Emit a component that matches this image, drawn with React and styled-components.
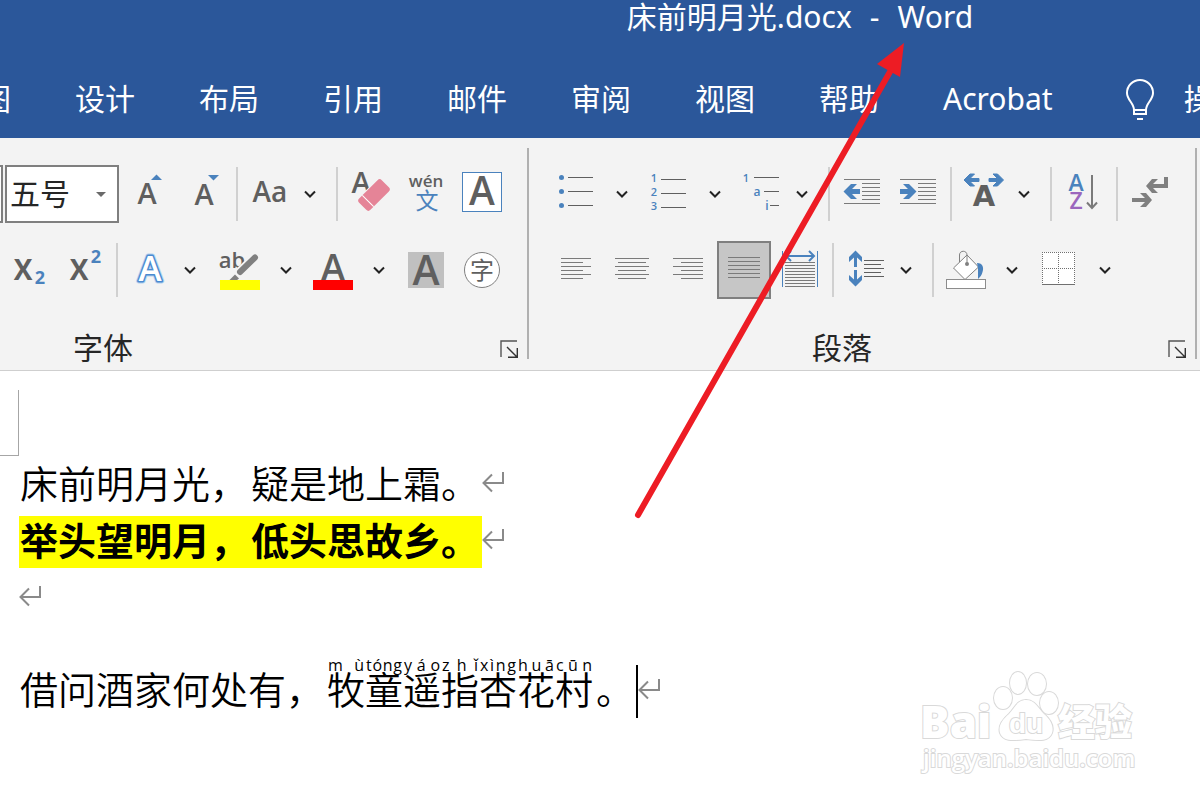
import styled, { createGlobalStyle } from "styled-components"

const INK = "#5f5f5f"
const LINE = "#7a7a7a"
const BLUE = "#4a82bd"

const GlobalStyle = createGlobalStyle`
  * {
    box-sizing: border-box;
  }
  body {
    margin: 0;
    background-color: white;
    font-family: "Noto Sans", "Noto Sans CJK SC", sans-serif;
  }
  button, select {
    font-family: inherit;
  }
`

const Page = styled.div`
  position: relative;
  display: flex;
  flex-direction: column;
  min-height: 100vh;
  overflow: hidden;
`
const Header = styled.header`
  background-color: #2b579a;
  color: white;
  font-size: 30px;
  overflow: hidden;
`
const Title = styled.h1`
  display: flex;
  justify-content: center;
  gap: 18px;
  margin: 0;
  padding-left: 400px;
  height: 61px;
  line-height: 34px;
  font-size: 30px;
  font-weight: 400;
  white-space: nowrap;
`
const Tabs = styled.nav`
  display: flex;
  align-items: center;
  gap: 64px;
  height: 77px;
  margin-left: -49px;
  padding-bottom: 1px;
`
const Tab = styled.button`
  flex: none;
  padding: 0;
  border: 0;
  background: none;
  color: inherit;
  font-size: 30px;
  line-height: 40px;
`
const Search = styled(Tab)`
  display: flex;
  align-items: center;
  gap: 28px;
  margin-left: 5px;
  white-space: nowrap;
`
const Ribbon = styled.section`
  display: flex;
  align-items: flex-start;
  padding-top: 10px;
  background-color: #f3f3f3;
  border-bottom: 1px solid #cfcfcf;
  overflow: hidden;
`
const Group = styled.div`
  flex: none;
  padding: 17px 0 3px;
`
const GroupEnd = styled.div`
  flex: none;
  width: 2px;
  height: 211px;
  background-color: #b0b0b0;
`
const Row = styled.div`
  display: flex;
  align-items: center;
  height: 58px;
  margin-bottom: 18px;
  padding-right: ${(props) => props.$end || 0}px;
`
const Footer = styled.div`
  display: flex;
  align-items: center;
  justify-content: space-between;
  height: 36px;
  margin-top: 32px;
  padding: 0 8px 0 ${(props) => props.$start}px;
  color: #262626;
  font-size: 30px;
  line-height: 34px;
`
const FooterLabel = styled.span`
  align-self: flex-start;
`
const Tool = styled.button`
  flex: none;
  display: flex;
  align-items: center;
  justify-content: center;
  width: ${(props) => props.$w}px;
  height: 58px;
  padding: 0;
  border: 0;
  background-color: ${(props) => (props.$active ? "#c6c6c6" : "transparent")};
  box-shadow: ${(props) => (props.$active ? "inset 0 0 0 2px #7f7f7f" : "none")};
`
const Launcher = styled(Tool)`
  height: 19px;
`
const Divider = styled.div`
  flex: none;
  width: 2px;
  height: 54px;
  margin-left: ${(props) => props.$gap || 0}px;
  background-color: #d0d0d0;
`
const Combo = styled.div`
  flex: none;
  position: relative;
  width: 114px;
  margin-right: ${(props) => props.$gap || 0}px;
  svg {
    position: absolute;
    right: 13px;
    top: 27px;
    pointer-events: none;
  }
`
const ComboSelect = styled.select`
  appearance: none;
  display: block;
  width: 100%;
  height: 58px;
  padding: 0 3px 2px;
  border: 2px solid #7f7f7f;
  border-radius: 0;
  background-color: white;
  color: #262626;
  font-size: 30px;
`
const FontRow = styled(Row)`
  margin-left: ${(props) => props.$pull || 0}px;
`
const Document = styled.main`
  position: relative;
  flex: 1;
  padding: 19px 0 0;
  color: black;
  font-family: "Noto Sans CJK SC", sans-serif;
  font-size: 38px;
`
const MarginCorner = styled.div`
  width: 19px;
  height: 66px;
  border-right: 1px solid #a6a6a6;
  border-bottom: 1px solid #a6a6a6;
`
const Line = styled.p`
  display: flex;
  align-items: center;
  height: 57px;
  margin: 0;
  padding-left: 19px;
  font-weight: ${(props) => (props.$bold ? 700 : 350)};
  > svg {
    margin-bottom: 5px;
  }
`
const Run = styled.span`
  display: flex;
  align-items: flex-start;
  gap: 3px;
  height: 52px;
  padding-right: 3px;
  padding-left: 1px;
  line-height: 46px;
  background-color: ${(props) => (props.$highlight ? "#ffff00" : "transparent")};
`
const Poem = styled(Run)`
  padding-right: 2px;
`
const VerseLine = styled(Line)`
  height: 64px;
  margin-top: 32px;
`
const Phonetic = styled.span`
  position: relative;
  display: block;
  width: 38px;
`
const Reading = styled.span`
  position: absolute;
  left: 1px;
  right: 1px;
  top: -8px;
  display: flex;
  justify-content: space-between;
  font-family: "Open Sans", sans-serif;
  font-size: 16px;
  line-height: 16px;
  font-weight: 400;
`
const Guide = styled.span`
  display: flex;
`
const Caret = styled.span`
  width: 2px;
  height: 53px;
  background-color: black;
`
const Annotation = styled.svg`
  position: absolute;
  left: 630px;
  top: 40px;
  pointer-events: none;
`
const Watermark = styled.svg`
  position: absolute;
  right: 56px;
  bottom: 20px;
`

const tabs = ["绘图", "设计", "布局", "引用", "邮件", "审阅", "视图", "帮助", "Acrobat"]

const verse = [
  ["牧", "mù"],
  ["童", "tóng"],
  ["遥", "yáo"],
  ["指", "zhǐ"],
  ["杏", "xìng"],
  ["花", "huā"],
  ["村", "cūn"],
]

function Icon({ w, label, active, children }) {
  return (
    <Tool $w={w} $active={active} aria-label={label} aria-pressed={active}>
      <svg width={w} height="58" fontFamily="Open Sans" fontWeight="600" fill={INK}>
        {children}
      </svg>
    </Tool>
  )
}

function Letter({ x, y, size, children, ...rest }) {
  return (
    <text x={x} y={y} fontSize={size} textAnchor="middle" {...rest}>
      {children}
    </text>
  )
}

function More({ w = 28, label }) {
  return (
    <Tool $w={w} aria-label={label}>
      <svg width="12" height="8" fill="none" stroke="#222" strokeWidth="2">
        <path d="M1 1.5 6 6.5 11 1.5" />
      </svg>
    </Tool>
  )
}

// each line is [x1, x2, y], one pixel tall
function Rules({ lines, color = LINE }) {
  return lines.map(([x1, x2, y]) => (
    <rect key={`${x1}-${y}`} x={x1} y={y} width={x2 - x1} height="1" fill={color} />
  ))
}

function alignLines(long, short, top = 17) {
  return [0, 1, 2, 3, 4, 5].map((i) => [...(i % 2 ? short : long), top + i * 4])
}

function LaunchButton({ label }) {
  return (
    <Launcher $w={19} aria-label={label}>
      <svg width="19" height="19" fill="none" stroke="#555" strokeWidth="1.4">
        <path d="M17 1H1V17" />
        <path d="M7 7 17 17M17.3 8V17.3H8" stroke="#333" />
      </svg>
    </Launcher>
  )
}

function ReturnMark() {
  return (
    <svg width="23" height="22" fill="none" stroke="#8a8a8a" strokeWidth="2">
      <path d="M21 1V12H1.5M10 3.5 1.5 12 10 20.5" />
    </svg>
  )
}

function FontGroup() {
  return (
    <Group>
      <FontRow $end={17} $pull={-111}>
        <Combo $gap={2}>
          <ComboSelect aria-label="字体名称" />
        </Combo>
        <Combo>
          <ComboSelect aria-label="字号">
            <option>五号</option>
          </ComboSelect>
          <svg width="10" height="5" fill="#6a6a6a">
            <path d="M0 0H10L5 5Z" />
          </svg>
        </Combo>
        <Icon w={57} label="增大字号">
          <Letter x={28} y={39} size={29}>A</Letter>
          <path d="M32 15H43L37.500 9.500Z" fill={BLUE} />
        </Icon>
        <Icon w={60} label="减小字号">
          <Letter x={28} y={40} size={29}>A</Letter>
          <path d="M32 10H43L37.500 15.500Z" fill={BLUE} />
        </Icon>
        <Divider />
        <Icon w={56} label="更改大小写">
          <Letter x={32} y={37} size={28}>Aa</Letter>
        </Icon>
        <More w={32} label="更改大小写选项" />
        <Divider $gap={10} />
        <Icon w={60} label="清除格式">
          <Letter x={23} y={28} size={29}>A</Letter>
          <g transform="rotate(-45 36 30)">
            <rect x="19" y="21" width="34" height="18" rx="4" fill="#f3f3f3" />
            <rect x="20" y="22" width="32" height="16" rx="3" fill="#e58497" />
            <rect x="27" y="22" width="1" height="16" fill="#fff" />
          </g>
        </Icon>
        <Icon w={56} label="拼音指南">
          <Letter x={28} y={22} size={17}>wén</Letter>
          <Letter x={29} y={44} size={23} fill={BLUE} fontFamily="Noto Sans CJK SC" fontWeight="400">
            文
          </Letter>
        </Icon>
        <Icon w={56} label="字符边框">
          <rect x="8.500" y="7.500" width="39" height="39" fill="#fff" stroke={BLUE} />
          <Letter x={28} y={40} size={39}>A</Letter>
        </Icon>
      </FontRow>
      <Row $end={17}>
        <Icon w={58} label="下标">
          <Letter x={23} y={39} size={28} fontWeight="700">X</Letter>
          <Letter x={40} y={43} size={18} fill={BLUE} fontWeight="700">2</Letter>
        </Icon>
        <Icon w={58} label="上标">
          <Letter x={21} y={39} size={28} fontWeight="700">X</Letter>
          <Letter x={38} y={22} size={18} fill={BLUE} fontWeight="700">2</Letter>
        </Icon>
        <Divider />
        <Icon w={60} label="文本效果">
          <Letter x={32} y={40} size={35} fill="none" stroke="#b9d5f1" strokeWidth="5" strokeLinejoin="round">A</Letter>
          <Letter x={32} y={40} size={35} fill="#fff" stroke="#4a8ad0" strokeWidth="3" strokeLinejoin="round" paintOrder="stroke">A</Letter>
        </Icon>
        <More w={24} label="文本效果选项" />
        <Icon w={72} label="突出显示">
          <Letter x={30} y={27} size={22}>ab</Letter>
          <path d="M29 39 53 16" stroke="#f3f3f3" strokeWidth="9" />
          <path d="M38 31 53 16.500" stroke="#808080" strokeWidth="6" strokeLinecap="round" />
          <path d="M27 39.500 33 33.500 37 37.500 34.500 39.500Z" fill="#808080" />
          <path d="M33 31 40 38" stroke="#f3f3f3" />
          <rect x="18" y="39" width="40" height="10" fill="#ff0" />
        </Icon>
        <More w={24} label="突出显示颜色" />
        <Icon w={69} label="字体颜色">
          <Letter x={35} y={40} size={37}>A</Letter>
          <rect x="15" y="39" width="40" height="10" fill="red" />
        </Icon>
        <More w={24} label="字体颜色选项" />
        <Icon w={63} label="字符底纹">
          <rect x="17" y="11" width="36" height="36" fill="#c0c0c0" />
          <Letter x={35} y={44} size={41}>A</Letter>
        </Icon>
        <Icon w={56} label="带圈字符">
          <circle cx="28" cy="29" r="17.500" fill="#fff" stroke="#7f7f7f" />
          <Letter x={28} y={38} size={24} fontFamily="Noto Sans CJK SC" fontWeight="400">字</Letter>
        </Icon>
      </Row>
      <Footer $start={73}>
        <FooterLabel>字体</FooterLabel>
        <LaunchButton label="字体设置" />
      </Footer>
    </Group>
  )
}

function ParagraphGroup() {
  const indentRules = [18, 22, 26, 30, 34]
  return (
    <Group>
      <Row $end={13}>
        <Icon w={79} label="项目符号">
          {[12, 26, 40].map((y) => (
            <circle key={y} cx="32.500" cy={y + 0.5} r="2.500" fill={BLUE} />
          ))}
          <Rules color={INK} lines={[[39, 64, 12], [39, 64, 26], [39, 64, 40]]} />
        </Icon>
        <More label="项目符号选项" />
        <Icon w={65} label="编号">
          <Letter x={18} y={17} size={11} fill={BLUE}>1</Letter>
          <Letter x={18} y={31} size={11} fill={BLUE}>2</Letter>
          <Letter x={18} y={45} size={11} fill={BLUE}>3</Letter>
          <Rules color={INK} lines={[[25, 50, 14], [25, 50, 28], [25, 50, 42]]} />
        </Icon>
        <More label="编号选项" />
        <Icon w={59} label="多级列表">
          <Letter x={17} y={17} size={11} fill={BLUE}>1</Letter>
          <Letter x={28} y={31} size={12} fill={BLUE}>a</Letter>
          <Letter x={38} y={45} size={12} fill={BLUE}>i</Letter>
          <Rules color={INK} lines={[[25, 50, 12], [35, 50, 26], [41, 50, 40]]} />
        </Icon>
        <More label="多级列表选项" />
        <Divider $gap={12} />
        <Icon w={60} label="减少缩进量">
          <Rules lines={[[14, 50, 14], [14, 50, 38], ...indentRules.map((y) => [32, 50, y])]} />
          <path d="M13.500 26.500 21 19H27L22 24H30V29H22L27 34H21Z" fill={BLUE} />
        </Icon>
        <Icon w={60} label="增加缩进量">
          <Rules lines={[[10, 46, 14], [10, 46, 38], ...indentRules.map((y) => [28, 46, y])]} />
          <path d="M26.500 26.500 19 19H13L18 24H10V29H18L13 34H19Z" fill={BLUE} />
        </Icon>
        <Divider />
        <Icon w={58} label="中文版式">
          <path d="M12 15 18 9H22.500L18 13.500H27V16.500H18L22.500 21H18Z" fill={BLUE} stroke={BLUE} />
          <path d="M51.500 15 45.500 9H41L45.500 13.500H37V16.500H45.500L41 21H45.500Z" fill={BLUE} stroke={BLUE} />
          <Letter x={32} y={41} size={29} fontFamily="DejaVu Sans" fontWeight="700">A</Letter>
        </Icon>
        <More label="中文版式选项" />
        <Divider $gap={12} />
        <Icon w={64} label="排序">
          <Letter x={24} y={26} size={23}  fill={BLUE}>A</Letter>
          <Letter x={24} y={44} size={23} fill="#9b66bd">Z</Letter>
          <path d="M40 10V43M35 37.500 40 43 45 37.500" fill="none" stroke={LINE} strokeWidth="2" />
        </Icon>
        <Divider />
        <Icon w={64} label="显示编辑标记">
          <path d="M28 21 34 14H40L35 19H46V12H50V23H35L40 28H34Z" fill="#808080" />
          <path d="M34 35 28 28H22L27 33H14V37H27L22 42H28Z" fill="#808080" />
        </Icon>
      </Row>
      <Row>
        <Icon w={70} label="左对齐">
          <Rules lines={alignLines([32, 62], [32, 54])} />
        </Icon>
        <Icon w={62} label="居中">
          <Rules lines={alignLines([16, 50], [19, 47])} />
        </Icon>
        <Icon w={56} label="右对齐">
          <Rules lines={alignLines([12, 42], [20, 42])} />
        </Icon>
        <Icon w={54} label="两端对齐" active>
          <Rules lines={alignLines([11, 43], [11, 43], 16)} />
        </Icon>
        <Icon w={61} label="分散对齐">
          <rect x="11" y="10" width="1" height="36" fill={BLUE} />
          <rect x="46" y="10" width="1" height="36" fill={BLUE} />
          <Rules lines={[21, 24, 27, 30, 33, 36, 39, 42, 45].map((y) => [14, 44, y])} />
          <path d="M14 15H43M20 10 15 15 20 20M38 10 43 15 38 20" fill="none" stroke={BLUE} strokeWidth="2" />
        </Icon>
        <Divider />
        <Icon w={58} label="行距">
          <path d="M21.500 9.500 28 16V21L23 16.500V26H20V16.500L15 21V16Z" fill={BLUE} />
          <path d="M21.500 45.500 28 39V34L23 38.500V29H20V38.500L15 34V39Z" fill={BLUE} />
          <Rules color={INK} lines={[[30, 50, 19], [30, 47, 23], [30, 50, 27], [30, 47, 31], [30, 50, 35]]} />
        </Icon>
        <More label="行距选项" />
        <Divider $gap={12} />
        <Icon w={64} label="底纹">
          <path d="M33 14 44.500 26 31 38.500 19.500 27Z" fill="#fff" stroke="#808080" />
          <path d="M25.500 21V14C25.500 9 33 9 33 14V22" fill="none" stroke="#808080" />
          <circle cx="33" cy="23" r="2" fill="#808080" />
          <path d="M43 22C49 22 50 27 48.500 31 48 34 46 36 44 38V27Z" fill={BLUE} />
          <rect x="12.500" y="38.500" width="39" height="9" fill="#fff" stroke="#8c8c8c" />
        </Icon>
        <More label="底纹颜色" />
        <Icon w={65} label="边框">
          <rect x="16" y="11" width="33" height="33" fill="#fff" />
          <path
            d="M16 11.500H49M16 27.500H49M16.500 11V43M32.500 11V43M48.500 11V43"
            stroke="#707070"
            strokeDasharray="1 1"
          />
          <rect x="16" y="43" width="33" height="1" fill="#707070" />
        </Icon>
        <More label="边框选项" />
      </Row>
      <Footer $start={283}>
        <FooterLabel>段落</FooterLabel>
        <LaunchButton label="段落设置" />
      </Footer>
    </Group>
  )
}

function BaiduMark() {
  return (
    <Watermark width="228" height="114" fill="#fff" stroke="#d9d9d9" strokeWidth="2" paintOrder="stroke" role="img" aria-label="Baidu 经验">
      <text x="4" y="72" fontFamily="Open Sans" fontWeight="800" fontSize="44">Bai</text>
      <ellipse cx="87" cy="32" rx="9" ry="11" />
      <ellipse cx="102" cy="17" rx="8" ry="11" />
      <ellipse cx="121" cy="18" rx="9" ry="11" />
      <ellipse cx="133" cy="37" rx="9" ry="11" />
      <path d="M110 34C119 34 122 42 128 48 135 54 138 61 136 67 133 75 125 75 110 73 95 75 87 75 84 67 82 60 86 54 93 48 99 42 101 34 110 34Z" />
      <text x="110" y="67" fontFamily="Liberation Sans" fontWeight="700" fontSize="28" textAnchor="middle">du</text>
      <text x="142" y="70" fontFamily="Noto Sans CJK SC" fontWeight="900" fontSize="37">经验</text>
      <text x="7" y="101" fontFamily="Open Sans" fontWeight="600" fontSize="24">jingyan.baidu.com</text>
    </Watermark>
  )
}

function App() {
  return (
    <Page>
      <GlobalStyle />
      <Header>
        <Title>
          <span>床前明月光.docx</span>
          <span>-</span>
          <span>Word</span>
        </Title>
        <Tabs>
          {tabs.map((tab) => (
            <Tab key={tab}>{tab}</Tab>
          ))}
          <Search>
            <svg width="34" height="44" fill="none" stroke="white" strokeWidth="2">
              <path d="M12 33C12 26 5 23 5 16A13 13 0 0 1 31 16C31 23 24 26 24 33V37H12ZM12 33H24M15 42H21" />
            </svg>
            操作说明搜索
          </Search>
        </Tabs>
      </Header>
      <Ribbon>
        <FontGroup />
        <GroupEnd />
        <ParagraphGroup />
        <GroupEnd />
      </Ribbon>
      <Document>
        <MarginCorner />
        <Line>
          <Run>
            <span>床前明月光，</span>
            <span>疑是地上霜。</span>
          </Run>
          <ReturnMark />
        </Line>
        <Line $bold>
          <Run $highlight>
            <span>举头望明月，</span>
            <span>低头思故乡。</span>
          </Run>
          <ReturnMark />
        </Line>
        <Line>
          <ReturnMark />
        </Line>
        <VerseLine>
          <Poem>
            <span>借问酒家何处有，</span>
            <Guide>
              {verse.map(([char, pinyin]) => (
                <Phonetic key={char}>
                  {char}
                  <Reading>
                    {[...pinyin].map((letter, i) => (
                      <span key={i}>{letter}</span>
                    ))}
                  </Reading>
                </Phonetic>
              ))}
            </Guide>
            <span>。</span>
          </Poem>
          <Caret />
          <ReturnMark />
        </VerseLine>
        <BaiduMark />
      </Document>
      <Annotation width="280" height="480">
        <path d="M8 475 261 30" stroke="#ed1c24" strokeWidth="6" strokeLinecap="round" />
        <path d="M274 3 247 24 270 37Z" fill="#ed1c24" />
      </Annotation>
    </Page>
  )
}

export default App
